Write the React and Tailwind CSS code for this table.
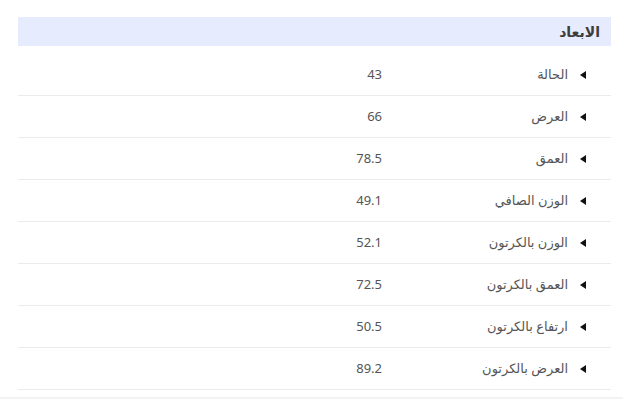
const rows = [
  ['الحالة', '43'],
  ['العرض', '66'],
  ['العمق', '78.5'],
  ['الوزن الصافي', '49.1'],
  ['الوزن بالكرتون', '52.1'],
  ['العمق بالكرتون', '72.5'],
  ['ارتفاع بالكرتون', '50.5'],
  ['العرض بالكرتون', '89.2'],
];

function Caret() {
  return (
    <svg width="6" height="8" viewBox="0 0 6 8" className="shrink-0">
      <path d="M6 0 L0 4 L6 8 Z" fill="#111" />
    </svg>
  );
}

export default function App() {
  return (
    <div
      dir="rtl"
      className="flex min-h-[399px] flex-col bg-white"
      style={{ fontFamily: '"Noto Sans", "DejaVu Sans", sans-serif' }}
    >
      <div className="pl-[18px] pr-[12px] pt-[17px]">
        <div className="flex h-[29px] items-center bg-[#e6ebfe] px-[11px]">
          <h3 className="text-[14px] font-semibold text-[#3d3d3d]">الابعاد</h3>
        </div>
        <div className="mt-[8px]">
          {rows.map(([label, value]) => (
            <div
              key={label}
              className="flex h-[42px] items-center border-b border-[#ebebeb] text-[13px] text-[#555]"
            >
              <div className="flex w-[217px] items-center gap-[12px] pr-[25px]">
                <Caret />
                <span>{label}</span>
              </div>
              <div className="pr-[12px]">{value}</div>
            </div>
          ))}
        </div>
      </div>
      <div className="mt-auto h-[2px] bg-[#f3f3f3]" />
    </div>
  );
}
